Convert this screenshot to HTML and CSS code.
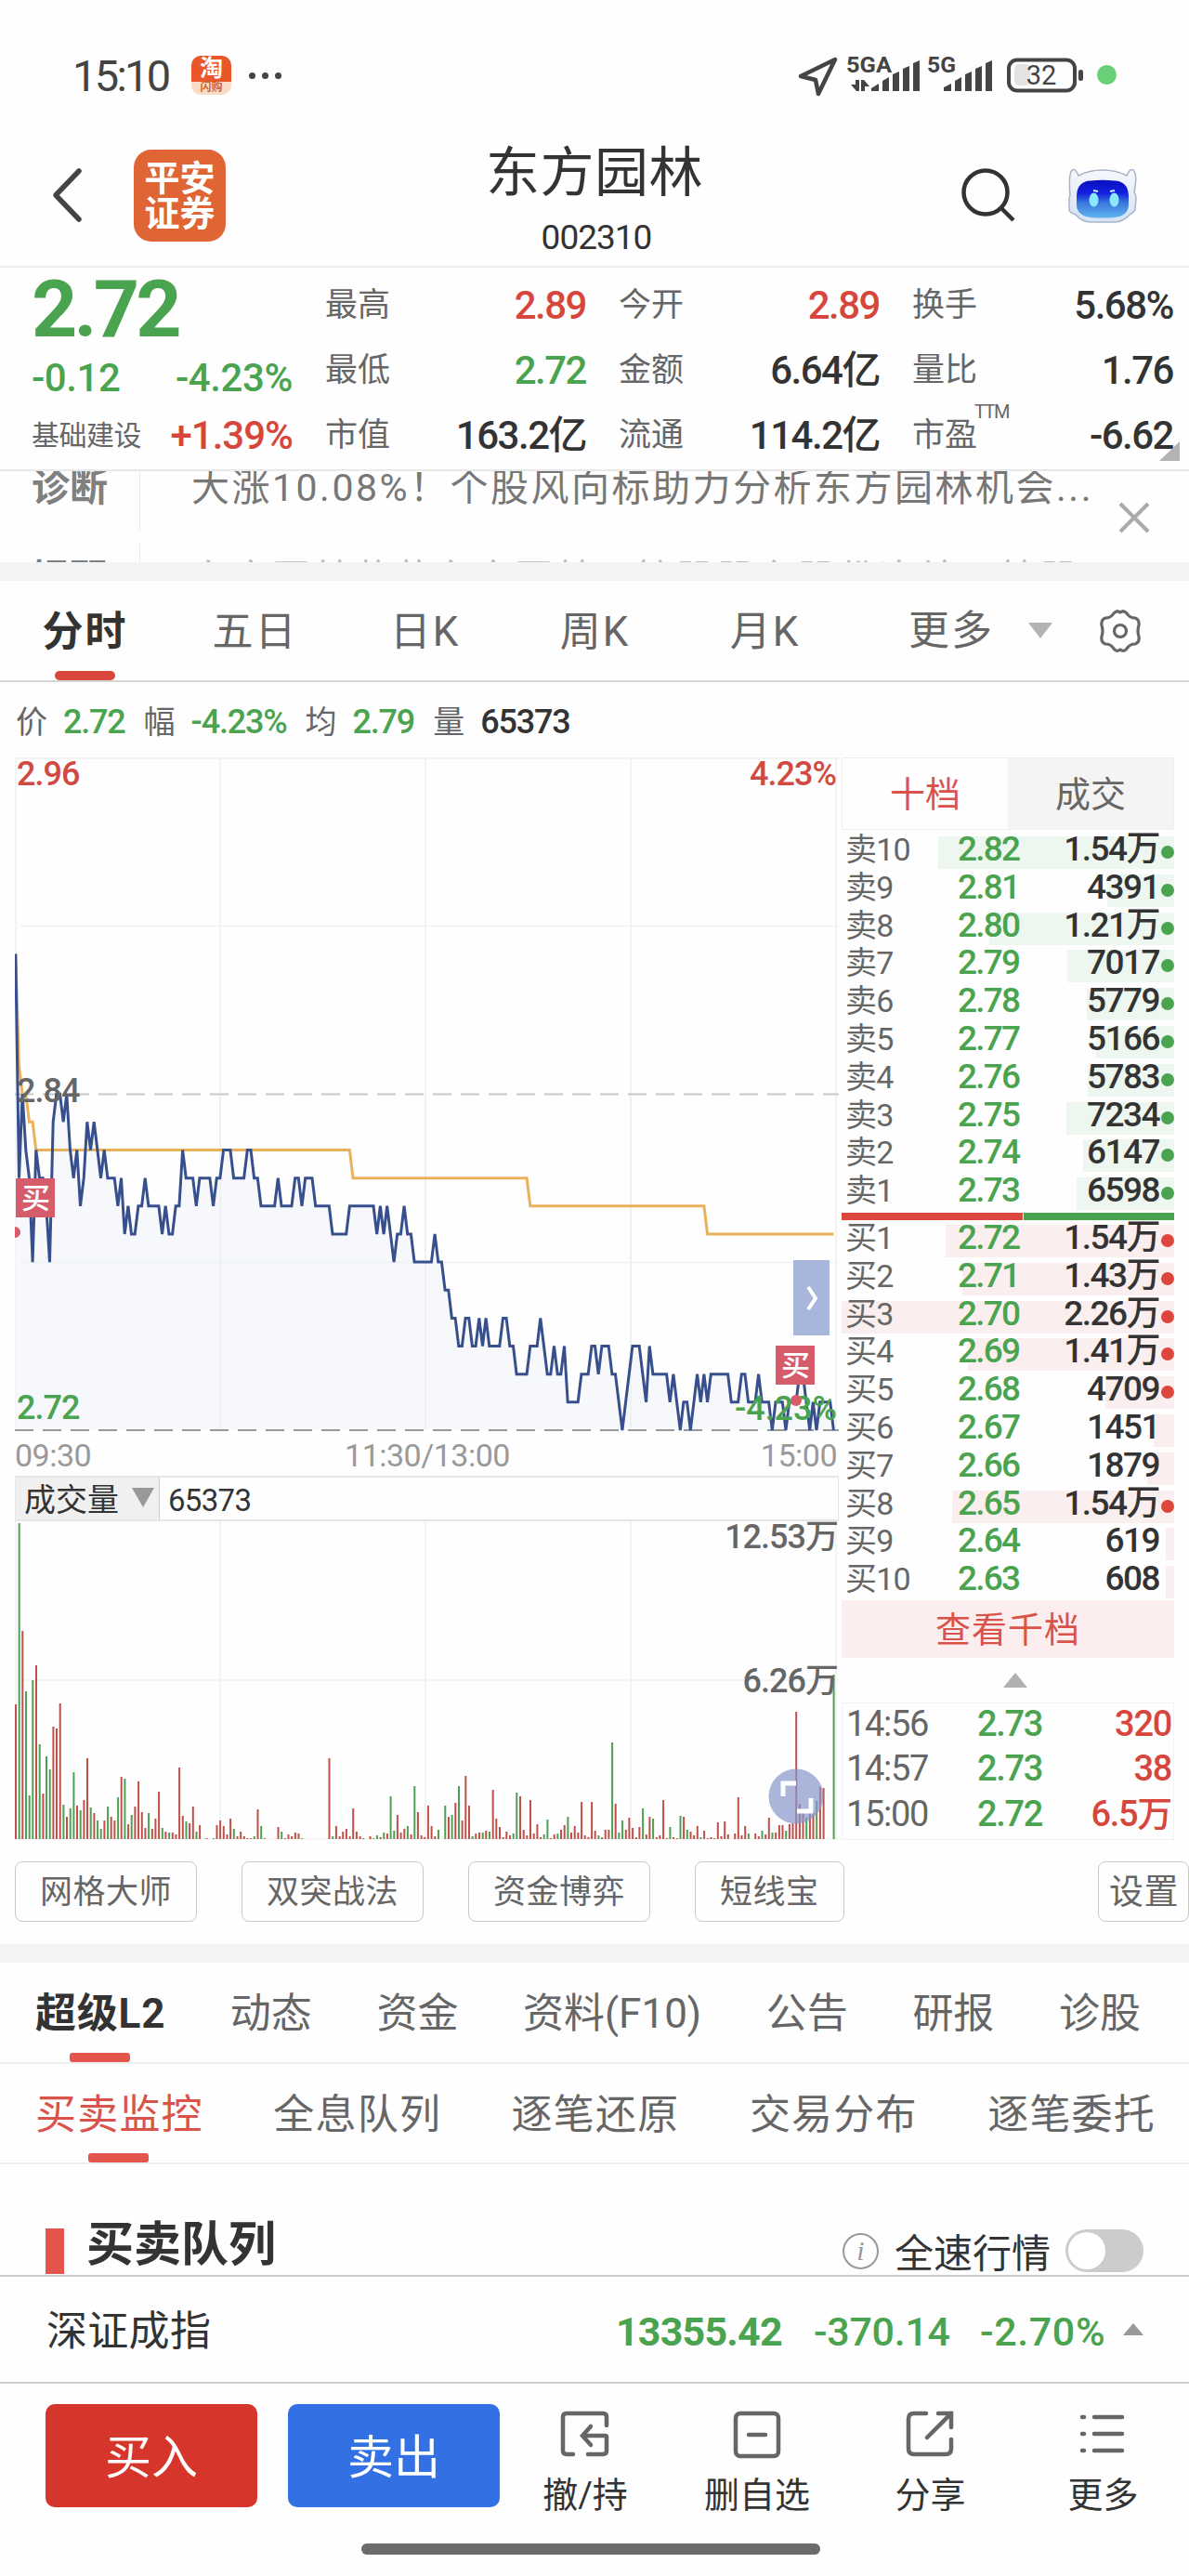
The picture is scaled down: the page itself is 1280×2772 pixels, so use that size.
FILE: index.html
```html
<!DOCTYPE html>
<html lang="zh-CN">
<head>
    <meta charset="UTF-8">
    <meta name="viewport" content="width=device-width, initial-scale=1.0">
    <title>东方园林 002310</title>
    <link rel="stylesheet" href="styles.css">
</head>
<body>
    <!-- Status bar -->
    <div class="status-bar">
        <span class="clock">15:10</span>
        <span class="app-badge"><b>淘</b><i>闪购</i></span>
        <span class="dots"><i></i><i></i><i></i></span>
        <svg class="status-icons" width="350" height="50" viewBox="856 56 350 50">
            <path d="M862 82 L899 64 L881 101 L878 86 Z" fill="none" stroke="#444" stroke-width="4.5" stroke-linejoin="round"/>
            <text x="911" y="78" class="net-label" textLength="49" lengthAdjust="spacingAndGlyphs">5GA</text>
            <path d="M925 86 V98 H922 L916 91 H921 V86 Z M927 98 V86 H930 L936 93 H931 V98 Z" fill="#444"/>
            <g fill="#444">
                <path d="M938 98 v-3 l8 -5 v8z M950 98 v-11 l7 -4 v15z M961 98 v-18 l7 -3 v21z M972 98 v-24 l7 -3 v27z M983 98 v-30 l7 -3 v33z"/>
                <path d="M1016 98 v-4 l8 -4 v8z M1028 98 v-11 l7 -4 v15z M1039 98 v-18 l7 -3 v21z M1050 98 v-24 l7 -3 v27z M1061 98 v-30 l7 -3 v33z"/>
                <rect x="1161" y="75" width="5" height="12" rx="2.5"/>
            </g>
            <text x="998" y="78" class="net-label" textLength="31" lengthAdjust="spacingAndGlyphs">5G</text>
            <rect x="1092" y="69" width="17" height="23" rx="5" fill="#e3e3e3"/>
            <rect x="1086" y="64.500" width="71" height="33" rx="9" fill="none" stroke="#444" stroke-width="4"/>
            <text x="1121" y="91" text-anchor="middle" class="battery-label">32</text>
            <circle cx="1191.500" cy="80.500" r="10.500" fill="#6ad078"/>
        </svg>
    </div>

    <!-- Header -->
    <div class="header">
        <svg class="back" width="36" height="60" viewBox="0 0 36 60"><path d="M31 4 L6 30 L31 56" fill="none" stroke="#444" stroke-width="5.500" stroke-linecap="round" stroke-linejoin="round"/></svg>
        <div class="logo"><span>平安</span><span>证券</span></div>
        <div class="title">
            <h1>东方园林</h1>
            <p>002310</p>
        </div>
        <svg class="search" width="60" height="60" viewBox="0 0 60 60"><circle cx="27" cy="27" r="23.500" fill="none" stroke="#333" stroke-width="4.500"/><path d="M43 43 L57 57" stroke="#333" stroke-width="4.500"/></svg>
        <svg class="robot" width="74" height="60" viewBox="0 0 74 60">
            <defs>
                <linearGradient id="face" x1="0" y1="0" x2="0" y2="1"><stop offset="0" stop-color="#0a0fc0"/><stop offset=".35" stop-color="#1420e0"/><stop offset=".6" stop-color="#3a78dc"/><stop offset="1" stop-color="#5fb4ee"/></linearGradient>
                <linearGradient id="shell" x1="0" y1="0" x2="0" y2="1"><stop offset="0" stop-color="#f6f7fb"/><stop offset="1" stop-color="#d6e2f4"/></linearGradient>
            </defs>
            <path d="M2 30 Q0 8 4 3 Q8 1 11 9 Q22 3 37 3 Q52 3 63 9 Q66 1 70 3 Q75 8 71 27 Q73 29 73 33 L72 46 Q70 49 66 51 Q59 59 50 59 L24 59 Q15 59 8 51 Q2 49 1 46 L1 33 Z" fill="url(#shell)" stroke="#a9b2c9" stroke-width="1.500"/>
            <path d="M9 30 Q10 15 24 14.500 Q37 13 50 14.500 Q64 15 65 30 L65 40 Q65 52 50 54 Q37 55 24 54 Q9 52 9 40 Z" fill="url(#face)"/>
            <ellipse cx="27.500" cy="35" rx="5" ry="7.500" fill="#8be8f8"/>
            <ellipse cx="49.500" cy="35" rx="5" ry="7.500" fill="#8be8f8"/>
            <path d="M27 25 l5 1 M45 26 l5 -1" stroke="#c9f0ff" stroke-width="2"/>
        </svg>
    </div>

    <!-- Quote -->
    <div class="quote">
        <div class="quote-main">
            <div class="last green">2.72</div>
            <div class="pair green"><span>-0.12</span><span>-4.23%</span></div>
            <div class="pair red"><small>基础建设</small><span>+1.39%</span></div>
        </div>
        <div class="quote-col">
            <div><label>最高</label><b class="red">2.89</b></div>
            <div><label>最低</label><b class="green">2.72</b></div>
            <div><label>市值</label><b>163.2亿</b></div>
        </div>
        <div class="quote-col">
            <div><label>今开</label><b class="red">2.89</b></div>
            <div><label>金额</label><b>6.64亿</b></div>
            <div><label>流通</label><b>114.2亿</b></div>
        </div>
        <div class="quote-col">
            <div><label>换手</label><b>5.68%</b></div>
            <div><label>量比</label><b>1.76</b></div>
            <div><label>市盈<sup>TTM</sup></label><b>-6.62</b></div>
        </div>
        <i class="corner"></i>
    </div>

    <!-- News ticker -->
    <div class="ticker">
        <div class="ticker-row"><b>诊断</b><span>大涨10.08%！个股风向标助力分析东方园林机会...</span></div>
        <div class="ticker-row next"><b>提醒</b><span>东方园林荣获东方园林，控股股东股份冻结，技股</span></div>
        <svg class="ticker-close" width="34" height="34" viewBox="0 0 34 34"><path d="M2 2 L32 32 M32 2 L2 32" stroke="#aaa" stroke-width="4"/></svg>
    </div>

    <!-- Period tabs -->
    <div class="period-tabs">
        <span class="tab active">分时</span>
        <span class="tab">五日</span>
        <span class="tab">日K</span>
        <span class="tab">周K</span>
        <span class="tab">月K</span>
        <span class="more">更多</span>
        <i class="caret"></i>
        <svg class="gear" width="48" height="48" viewBox="0 0 48 48"><path d="M17 5 Q20 1 24 4 Q28 1 31 5 Q34 10 40 10 Q45 12 44 18 Q42 24 44 30 Q45 36 40 38 Q34 38 31 43 Q28 47 24 44 Q20 47 17 43 Q14 38 8 38 Q3 36 4 30 Q6 24 4 18 Q3 12 8 10 Q14 10 17 5 Z" fill="none" stroke="#666" stroke-width="3.200" stroke-linejoin="round"/><circle cx="24" cy="24" r="6.500" fill="none" stroke="#666" stroke-width="3.200"/></svg>
    </div>

    <div class="info-row">
        <label>价</label><span class="green">2.72</span>
        <label>幅</label><span class="green">-4.23%</span>
        <label>均</label><span class="green">2.79</span>
        <label>量</label><span>65373</span>
    </div>

    <!-- Chart and order book -->
    <div class="market">
        <div class="charts">
            <svg id="price-chart" width="887" height="773" viewBox="16 815 887 773"></svg>
            <div class="volume-head">
                <span class="volume-select">成交量<i class="caret dark"></i></span>
                <span class="volume-value">65373</span>
            </div>
            <svg id="volume-chart" width="887" height="343" viewBox="16 1637 887 343"></svg>
        </div>

        <div class="book">
            <div class="book-tabs"><span class="active">十档</span><span>成交</span></div>
            <div class="orders" id="sell"></div>
            <div class="ratio"><i></i><i></i></div>
            <div class="orders" id="buy"></div>
            <div class="book-more">查看千档</div>
            <i class="up"></i>
            <div class="trades">
                <div><span>14:56</span><b>2.73</b><em>320</em></div>
                <div><span>14:57</span><b>2.73</b><em>38</em></div>
                <div><span>15:00</span><b>2.72</b><em>6.5万</em></div>
            </div>
        </div>
    </div>

    <!-- Tools -->
    <div class="chips">
        <span>网格大师</span>
        <span>双突战法</span>
        <span>资金博弈</span>
        <span>短线宝</span>
        <span class="setting">设置</span>
    </div>

    <!-- Detail tabs -->
    <div class="main-tabs">
        <span class="active">超级L2</span>
        <span>动态</span>
        <span>资金</span>
        <span>资料(F10)</span>
        <span>公告</span>
        <span>研报</span>
        <span>诊股</span>
    </div>
    <div class="sub-tabs">
        <span class="active">买卖监控</span>
        <span>全息队列</span>
        <span>逐笔还原</span>
        <span>交易分布</span>
        <span>逐笔委托</span>
    </div>

    <div class="queue-head">
        <i class="mark"></i>
        <h2>买卖队列</h2>
        <span class="info">i</span>
        <span class="speed">全速行情</span>
        <span class="switch"></span>
    </div>

    <!-- Index bar -->
    <div class="index-bar">
        <span class="index-name">深证成指</span>
        <b>13355.42</b>
        <span class="change">-370.14</span>
        <span class="percent">-2.70%</span>
        <i class="up small"></i>
    </div>

    <!-- Bottom actions -->
    <div class="actions">
        <button class="buy-btn">买入</button>
        <button class="sell-btn">卖出</button>
        <div class="action a1">
            <svg width="56" height="56" viewBox="0 0 56 56"><path d="M51 17 V8 Q51 4 47 4 H8 Q4 4 4 8 V44 Q4 48 8 48 H15 M31 48 H47 Q51 48 51 44 V29 Q51 28 49 28 H26 M34 18 L25 28 L34 38"/></svg>
            <span>撤/持</span>
        </div>
        <div class="action a2">
            <svg width="56" height="56" viewBox="0 0 56 56"><rect x="5" y="4" width="46" height="46" rx="5"/><path d="M19 27 H37"/></svg>
            <span>删自选</span>
        </div>
        <div class="action a3">
            <svg width="56" height="56" viewBox="0 0 56 56"><path d="M23 4 H10 Q4 4 4 10 V42 Q4 48 10 48 H44 Q50 48 50 42 V32 M36 4 H50 V19 M50 4 L24 30"/></svg>
            <span>分享</span>
        </div>
        <div class="action a4">
            <svg width="56" height="56" viewBox="0 0 56 56"><path d="M5 8 H7 M5 26 H7 M5 44 H7 M18 8 H48 M18 26 H48 M18 44 H48"/></svg>
            <span>更多</span>
        </div>
    </div>
    <div class="home-bar"></div>

    <script src="script.js"></script>
</body>
</html>
```
FILE: styles.css
```css
* {
    box-sizing: border-box;
}

body {
    margin: 0;
    width: 1280px;
    height: 2772px;
    overflow: hidden;
    background: #fefefe;
    color: #333;
    font-family: Roboto, "Noto Sans CJK SC", sans-serif;
    display: flex;
    flex-direction: column;
}

i, em {
    font-style: normal;
}

.green {
    color: #4aa34f;
}

.red {
    color: #d7463c;
}

/* Status bar */
.status-bar {
    height: 124px;
    padding: 38px 0 0 78px;
    display: flex;
    align-items: center;
    color: #444;
}

.clock {
    width: 128px;
    font-size: 47px;
    font-weight: 400;
    letter-spacing: -2.7px;
}

.app-badge {
    width: 43px;
    height: 42px;
    border-radius: 10px;
    background: linear-gradient(#e8562a 66%, #f8dcc8 66%);
    display: flex;
    flex-direction: column;
    align-items: center;
    color: #fff;
    overflow: hidden;
}

.app-badge b {
    font-size: 25px;
    line-height: 28px;
}

.app-badge i {
    font-size: 12px;
    line-height: 13px;
    color: #d0642f;
    font-weight: 700;
}

.dots {
    display: flex;
    gap: 7px;
    margin-left: 19px;
}

.dots i {
    width: 7px;
    height: 7px;
    border-radius: 50%;
    background: #444;
}

.status-icons {
    margin-left: 553px;
}

.net-label {
    font: 700 24px Roboto, sans-serif;
    fill: #444;
}

.battery-label {
    font: 400 29px Roboto, sans-serif;
    fill: #444;
}

/* Header */
.header {
    height: 164px;
    padding-left: 54px;
    border-bottom: 2px solid #ececec;
    display: flex;
    align-items: flex-start;
}

.back {
    margin-top: 56px;
}

.logo {
    width: 99px;
    height: 99px;
    margin: 37px 0 0 54px;
    padding-top: 12px;
    border-radius: 19px;
    background: #e06535;
    color: #fff;
    font-size: 38px;
    line-height: 38px;
    font-weight: 700;
    text-align: center;
    display: flex;
    flex-direction: column;
}

.title {
    width: 320px;
    margin-left: 239px;
    text-align: center;
}

.title h1 {
    margin: 20px -10px 0;
    font-size: 58px;
    line-height: 84px;
    font-weight: 400;
    letter-spacing: .5px;
    transform: translateX(-2px);
}

.title p {
    margin: 5px 0 0;
    font-size: 37px;
    line-height: 46px;
    letter-spacing: -1px;
}

.search {
    margin: 56px 0 0 232px;
}

.robot {
    margin: 56px 0 0 56px;
}

/* Quote */
.quote {
    height: 219px;
    padding: 0 17px 0 34px;
    border-bottom: 2px solid #e8e8e8;
    display: flex;
    gap: 35px;
    position: relative;
    font-size: 42px;
    letter-spacing: -1.5px;
}

.quote-main {
    width: 281px;
}

.last {
    height: 88px;
    padding-top: 2px;
    font-size: 86px;
    line-height: 86px;
    font-weight: 700;
    letter-spacing: -3.8px;
}

.pair {
    height: 62px;
    display: flex;
    justify-content: space-between;
    align-items: center;
    line-height: 62px;
    font-weight: 500;
    letter-spacing: -.4px;
}

.pair small {
    font-size: 30px;
    font-weight: 400;
    letter-spacing: -.5px;
    color: #666;
}

.pair.red span {
    letter-spacing: -1px;
}

.quote-col {
    width: 281px;
    padding-top: 6px;
}

.quote-col div {
    height: 70px;
    display: flex;
    justify-content: space-between;
    line-height: 70px;
}

.quote-col label {
    font-size: 35px;
    letter-spacing: 0;
    color: #666;
    position: relative;
}

.quote-col sup {
    position: absolute;
    left: 67px;
    top: -26px;
    font-size: 20px;
    line-height: 70px;
    letter-spacing: -1.5px;
}

.quote-col b {
    font-weight: 500;
}

.corner {
    position: absolute;
    left: 1248px;
    top: 187px;
    border-left: 22px solid transparent;
    border-bottom: 21px solid #b3b3b3;
}

/* News ticker */
.ticker {
    height: 98px;
    overflow: hidden;
    position: relative;
    color: #777;
}

.ticker-row {
    height: 84px;
    margin-top: -20px;
    display: flex;
    line-height: 76px;
    font-size: 41px;
    letter-spacing: 2.5px;
    white-space: nowrap;
}

.ticker-row b {
    width: 117px;
    padding-left: 34px;
    letter-spacing: 0;
    color: #808080;
}

.ticker-row span {
    margin: 0 0 0 33px;
    padding-left: 55px;
    border-left: 1px solid #e8e8e8;
}

.ticker-row.next {
    margin-top: 14px;
    color: #bbb;
}

.ticker-close {
    position: absolute;
    left: 1204px;
    top: 33px;
}

/* Period tabs */
.period-tabs {
    height: 129px;
    border-top: 20px solid #f2f3f5;
    border-bottom: 2px solid #d5d5d5;
    display: flex;
    align-items: center;
    font-size: 44px;
    letter-spacing: 2px;
    color: #666;
}

.tab {
    width: 183px;
    height: 107px;
    line-height: 110px;
    text-align: center;
}

.tab.active {
    color: #333;
    font-weight: 700;
    position: relative;
}

.tab.active::after,
.main-tabs .active::after,
.sub-tabs .active::after {
    content: "";
    position: absolute;
    left: 50%;
    bottom: 0;
    width: 65px;
    height: 10px;
    margin-left: -33px;
    border-radius: 5px;
    background: #d9463c;
}

.more {
    width: 129px;
    height: 107px;
    margin-left: 63px;
    line-height: 109px;
}

.caret {
    width: 0;
    border: 13.5px solid transparent;
    border-top: 17px solid #b3b3b3;
    border-bottom: 0;
}

.gear {
    margin-left: 49px;
}

/* Info row */
.info-row {
    height: 81px;
    padding-left: 17px;
    display: flex;
    align-items: center;
    font-size: 36px;
    letter-spacing: -1.2px;
    line-height: 80px;
    padding-top: 4px;
}

.info-row label {
    width: 51px;
    font-size: 34px;
    color: #666;
}

.info-row span {
    margin-right: 20px;
    font-weight: 500;
}

/* Market */
.market {
    height: 1165px;
    padding-left: 16px;
    display: flex;
    gap: 3px;
}

.charts {
    width: 887px;
}

.charts svg {
    display: block;
}

.charts text {
    font: 500 36px Roboto, "Noto Sans CJK SC", sans-serif;
    letter-spacing: -1px;
    fill: #666;
}

.charts .t-red {
    fill: #d04a42;
}

.charts .t-green {
    fill: #4aa34f;
}

.charts .t-axis {
    font-size: 34px;
    font-weight: 400;
    letter-spacing: -.5px;
    fill: #999;
}

.charts .t-mark {
    font-size: 31px;
    fill: #fff;
}

.volume-head {
    height: 49px;
    border: 1px solid #e6e6e6;
    border-width: 2px 1px;
    display: flex;
    line-height: 48px;
}

.volume-select {
    width: 155px;
    padding-left: 9px;
    background: #f0f0f0;
    border-right: 1px solid #ccc;
    font-size: 34px;
    display: flex;
    gap: 14px;
}

.caret.dark {
    height: 0;
    margin-top: 11px;
    border-width: 21px 12.5px 0;
    border-top-color: #999;
}

.volume-value {
    padding-left: 9px;
    font-size: 33px;
    letter-spacing: -.7px;
    line-height: 50px;
}

/* Order book */
.book {
    width: 358px;
}

.book-tabs {
    height: 78px;
    border: 1px solid #eee;
    display: flex;
    font-size: 38px;
    line-height: 78px;
    text-align: center;
    color: #666;
}

.book-tabs span {
    width: 50%;
    background: #f4f4f4;
}

.book-tabs .active {
    background: none;
    color: #d9534a;
}

.orders {
    padding-top: 4px;
}

#buy {
    padding-top: 2px;
}

.order {
    height: 40.8px;
    display: flex;
    position: relative;
    line-height: 40px;
    font-size: 37px;
    font-weight: 500;
    letter-spacing: -1.5px;
}

.order .bar {
    position: absolute;
    right: 0;
    top: 3px;
    height: 35px;
    background: #edf7ef;
}

#buy .bar {
    background: #fbeeee;
}

.order span {
    position: relative;
    margin-top: -3px;
}

.order .level {
    width: 125px;
    padding-left: 4px;
    font-size: 34px;
    font-weight: 400;
    letter-spacing: -.8px;
    color: #666;
}

.order .price {
    width: 90px;
    color: #4aa34f;
    letter-spacing: -1.8px;
}

.order .amount {
    flex: 1;
    padding-right: 16px;
    text-align: right;
}

.order .dot {
    position: absolute;
    right: 0;
    top: 13px;
    width: 14px;
    height: 14px;
    border-radius: 50%;
    background: #4aa34f;
}

#buy .dot {
    background: #dc463c;
}

.ratio {
    height: 8px;
    display: flex;
    gap: 1px;
}

.ratio i {
    width: 195px;
    background: #dc463c;
}

.ratio i + i {
    flex: 1;
    background: #4aa34f;
}

.book-more {
    height: 62px;
    margin-top: -1px;
    background: #fceeee;
    color: #d9534a;
    font-size: 38px;
    line-height: 65px;
    letter-spacing: 1px;
    text-align: center;
}

.up {
    display: block;
    width: 0;
    margin: 16px 0 0 174px;
    border: 13px solid transparent;
    border-top: 0;
    border-bottom: 16px solid #b0b0b0;
}

.trades {
    margin-top: 16px;
    padding: 0 2px 0 4px;
    border: 1px solid #f3f3f3;
    height: 148px;
    font-size: 38px;
    font-weight: 500;
    letter-spacing: -1.3px;
}

.trades div {
    height: 48.5px;
    display: flex;
    line-height: 44px;
}

.trades span {
    width: 141px;
    font-weight: 400;
    color: #666;
}

.trades b {
    font-weight: 500;
    color: #4aa34f;
}

.trades em {
    flex: 1;
    text-align: right;
    color: #d7463c;
}

/* Chips */
.chips {
    height: 112px;
    padding: 23px 0 0 16px;
    display: flex;
    gap: 48px;
    font-size: 35px;
    color: #666;
}

.chips span {
    height: 65px;
    padding: 0 26px;
    border: 1.5px solid #c8c8c8;
    border-radius: 8px;
    line-height: 66px;
    white-space: nowrap;
    letter-spacing: .5px;
}

.chips .setting {
    width: 98px;
    margin: 0 0 0 auto;
    padding: 0 0 0 11px;
    font-size: 37px;
}

/* Detail tabs */
.main-tabs,
.sub-tabs {
    display: flex;
    justify-content: space-between;
    font-size: 44px;
    color: #666;
    border-bottom: 2px solid #eee;
}

.main-tabs {
    height: 129px;
    padding: 0 52px 0 38px;
    border-top: 20px solid #f2f3f5;
    line-height: 110px;
}

.sub-tabs {
    height: 108px;
    padding: 0 36px 0 38px;
    line-height: 110px;
    letter-spacing: 1.2px;
}

.main-tabs .active,
.sub-tabs .active {
    position: relative;
}

.main-tabs .active {
    color: #333;
    font-weight: 700;
    letter-spacing: .8px;
}

.sub-tabs .active {
    color: #d9534a;
}

.main-tabs .active::after,
.sub-tabs .active::after {
    border-radius: 3px;
    background: #e4554e;
}

/* Queue head */
.queue-head {
    height: 121px;
    padding: 0 49px;
    border-bottom: 2px solid #ccc;
    display: flex;
}

.mark {
    width: 20px;
    height: 49px;
    margin-top: 69px;
    background: #e4554e;
}

.queue-head h2 {
    width: 813px;
    margin: 50px 0 0 24px;
    font-size: 51px;
    line-height: 74px;
    font-weight: 700;
}

.info {
    width: 39px;
    height: 39px;
    margin-top: 74px;
    margin-left: 1px;
    flex: none;
    border: 2px solid #999;
    border-radius: 50%;
    color: #999;
    font: italic 30px/34px "Liberation Serif", serif;
    text-align: center;
}

.speed {
    flex: none;
    margin: 67px 16px 0 17px;
    font-size: 42px;
    line-height: 60px;
}

.switch {
    width: 84px;
    height: 46px;
    margin-top: 70px;
    flex: none;
    border-radius: 23px;
    background: #ccc;
    padding: 3px;
}

.switch::before {
    content: "";
    display: block;
    width: 40px;
    height: 40px;
    border-radius: 50%;
    background: #fff;
}

/* Index bar */
.index-bar {
    height: 115px;
    padding-left: 50px;
    border-bottom: 2px solid #ccc;
    display: flex;
    line-height: 118px;
    font-size: 43px;
    font-weight: 500;
    letter-spacing: -.8px;
    color: #4aa34f;
}

.index-name {
    width: 613px;
    font-size: 44px;
    font-weight: 400;
    letter-spacing: .3px;
    color: #333;
}

.index-bar b {
    width: 213px;
    font-weight: 700;
}

.index-bar .change {
    width: 179px;
    letter-spacing: -.3px;
}

.index-bar .percent {
    width: 137px;
    letter-spacing: .6px;
}

.up.small {
    margin: 50px 0 0 17px;
    border-width: 0 11px 13px;
    border-bottom-color: #999;
    height: 0;
}

/* Bottom actions */
.actions {
    height: 171px;
    padding: 22px 0 0 49px;
    display: flex;
}

.actions button {
    flex: none;
    width: 228px;
    height: 111px;
    margin-right: 33px;
    padding: 0 0 5px;
    border: 0;
    border-radius: 10px;
    color: #fff;
    font-family: inherit;
    font-size: 50px;
}

.buy-btn {
    background: #d6352b;
}

.sell-btn {
    background: #3370e3;
}

.action {
    flex: none;
    display: flex;
    flex-direction: column;
    align-items: center;
    padding-top: 6px;
    font-size: 38px;
    line-height: 56px;
}

.action svg {
    fill: none;
    stroke: #666;
    stroke-width: 4.5;
    stroke-linecap: round;
}

.action span {
    margin-top: 8px;
}

.a1 {
    width: 118px;
}

.a2 {
    width: 252px;
}

.a3 {
    width: 121px;
}

.a4 {
    width: 251px;
}

.home-bar {
    width: 494px;
    height: 12px;
    margin: 1px 0 0 389px;
    border-radius: 6px;
    background: #6b6b6b;
}
```
FILE: script.js
```js
const STEP = 3.669;

// [minute, price in cents], points between are on a straight line
const price = [
    [0, 289], [1, 281], [2, 284], [3, 282], [4, 281], [5, 278], [6, 282], [7, 281], [8, 281], [9, 280],
    [10, 278], [11, 283], [12, 284], [13, 284], [14, 283], [15, 284], [16, 282], [17, 281], [18, 282],
    [19, 280], [20, 281], [21, 283], [22, 282], [23, 283], [24, 282], [25, 281], [26, 282], [27, 281],
    [29, 281], [30, 280], [31, 281], [32, 279], [33, 280], [34, 279], [35, 279], [36, 280], [37, 280],
    [38, 281], [39, 280], [42, 280], [43, 279], [44, 280], [45, 279], [46, 279], [47, 280], [48, 280],
    [49, 282], [50, 281], [52, 281], [53, 280], [54, 281], [57, 281], [58, 280], [59, 281], [60, 281],
    [61, 282], [63, 282], [64, 281], [67, 281], [68, 282], [69, 282], [70, 281], [71, 281], [72, 280],
    [76, 280], [77, 281], [78, 280], [81, 280], [82, 281], [83, 281], [84, 280], [85, 281], [87, 281],
    [88, 280], [92, 280], [93, 279], [97, 279], [98, 280], [105, 280], [106, 279], [107, 280], [108, 279],
    [109, 280], [110, 279], [111, 278], [112, 279], [113, 279], [114, 280], [115, 279], [116, 279],
    [117, 278], [122, 278], [123, 279], [124, 278], [125, 278], [126, 277], [127, 277], [128, 276],
    [129, 276], [130, 275], [131, 275], [132, 276], [133, 276], [134, 275], [135, 275], [136, 276],
    [137, 275], [138, 276], [139, 275], [142, 275], [143, 276], [144, 276], [145, 275], [146, 275],
    [147, 274], [150, 274], [151, 275], [153, 275], [154, 276], [155, 275], [156, 274], [157, 274],
    [158, 275], [159, 274], [160, 274], [161, 275], [162, 273], [165, 273], [166, 274], [168, 274],
    [169, 275], [170, 275], [171, 274], [172, 275], [174, 275], [175, 274], [176, 274], [178, 272],
    [181, 275], [183, 275], [184, 274], [185, 273], [186, 275], [187, 274], [191, 274], [192, 273],
    [193, 274], [195, 272], [196, 273], [197, 273], [198, 272], [200, 274], [201, 273], [202, 274],
    [203, 273], [204, 274], [209, 274], [210, 273], [212, 273], [213, 274], [214, 274], [215, 273],
    [217, 273], [218, 274], [219, 273], [221, 273], [222, 272], [223, 273], [225, 273], [226, 272],
    [227, 273], [229, 273], [230, 274], [231, 274], [233, 272], [234, 273], [235, 272], [236, 273],
    [239, 273], [240, 272]
];

const average = [
    [0, 289], [1, 285], [2, 284], [3, 284], [4, 283], [5, 283], [6, 282], [98, 282], [99, 281],
    [150, 281], [151, 280], [202, 280], [203, 279], [240, 279]
];

// minute:height, g = green bar
const volume = '0:145 1:340g 2:224 3:159g 4:47g 5:171g 6:187 7:102g 8:49 9:89g 10:75g 11:121 12:119 13:146 ' +
    '14:37g 15:24 16:33g 17:72g 18:36 19:31g 20:42 21:87 22:34g 23:28 24:20g 25:11g 26:20 27:35g 28:24 29:20 ' +
    '30:45g 31:67 32:65g 33:16 34:26g 35:35 36:62 37:29 38:12 39:28g 40:11 41:22 42:51 43:12g 44:8 45:7g 46:7 ' +
    '47:5 48:77 49:25 50:19g 51:17 52:35 53:8g 54:15 56:1 58:1g 59:15 60:20 61:14 62:5 63:22 64:11g 65:3 66:8 ' +
    '67:3 68:1 69:1 70:3g 71:32 72:14g 73:1 77:13 78:8g 79:1 80:5 81:3 82:7 83:6 84:1g 92:87 93:3g 94:14 95:3 ' +
    '96:8 97:11 98:3 99:33 100:8 101:3 102:1 104:3 105:1g 106:4g 107:2 108:7g 109:6 110:46g 111:9g 112:26 ' +
    '113:7 114:11 115:14g 116:5 117:57g 118:29 119:4 120:2 121:36 122:14 123:3 124:10g 126:36g 127:24 128:26g ' +
    '129:39 130:57g 131:20 132:68 133:36 134:3g 135:6 136:7 137:7g 138:9 139:8g 140:53 141:22 142:13 143:2 ' +
    '144:8 145:4 146:6g 147:50g 148:46 149:10 150:4 151:42 152:6 153:16 154:2 155:5g 156:21g 157:1 158:5 ' +
    '159:6g 160:10 161:15 162:24g 163:7 164:14 165:7 166:40 167:4 168:2 169:40 170:9 171:4g 172:2 173:10 ' +
    '174:10 175:104g 176:38 177:7g 178:20g 179:10 180:23 181:12 182:2 183:13 184:33g 185:5 186:24 187:22g ' +
    '188:2 189:4 190:42 191:1 192:13g 193:2 194:1 195:25g 196:24 197:10g 198:8 199:4 200:14 201:2g 202:9 ' +
    '203:1 204:2 205:1 206:18 207:3 208:19 209:5 211:6 212:45 213:4 214:14 215:6g 217:6 218:3 219:9g 220:5 ' +
    '221:23 222:7g 223:7 224:15 225:15 226:9g 227:16 228:17 229:137 230:38 231:29 232:23g 233:29 234:30 ' +
    '235:41g 236:56 237:55 240:177g';

const x = m => (16.8 + m * STEP).toFixed(1);
const y = p => (1539 - (p - 272) * 30.15).toFixed(1);
const line = list => list.map(([m, p]) => x(m) + ',' + y(p)).join(' ');

function vertical(top, bottom) {
    return [17, 237, 458, 679, 900].map(v => `<path d="M${v} ${top} V${bottom}" stroke="#f3f3f4" stroke-width="2"/>`).join('');
}

// Price chart
document.getElementById('price-chart').innerHTML = `
    <path d="M16 816 H903" stroke="#f3f3f4" stroke-width="2"/>
    ${vertical(816, 1539)}
    <polygon points="17,1539 ${line(price)} 897,1539" fill="#f6f8fc"/>
    <path d="M22 996.500 H903 M22 1358.500 H903" stroke="#f0f1f3" stroke-width="1.500"/>
    <path d="M237 1180 V1539 M458 1180 V1539 M679 1180 V1539" stroke="#eef0f3" stroke-width="2"/>
    <path d="M16 1177.500 H903" stroke="#c8c8c8" stroke-width="2" stroke-dasharray="20 10"/>
    <path d="M16 1539 H903" stroke="#999" stroke-width="2" stroke-dasharray="20 10"/>
    <polyline points="${line(average)}" fill="none" stroke="#eab15c" stroke-width="3"/>
    <polyline points="${line(price)}" fill="none" stroke="#374f8c" stroke-width="3"/>
    <text x="18" y="845" class="t-red">2.96</text>
    <text x="900" y="845" class="t-red" text-anchor="end">4.23%</text>
    <text x="18" y="1186">2.84</text>
    <text x="18" y="1527" class="t-green">2.72</text>
    <text x="900" y="1528" class="t-green" text-anchor="end" textLength="109">-4.23%</text>
    <rect x="17" y="1268" width="42" height="42" fill="#d65c6b"/>
    <text x="38" y="1300" class="t-mark" text-anchor="middle">买</text>
    <circle cx="16" cy="1326" r="6" fill="#d65c6b"/>
    <rect x="835" y="1448" width="42" height="42" fill="#d65c6b"/>
    <text x="856" y="1480" class="t-mark" text-anchor="middle">买</text>
    <circle cx="857" cy="1507" r="6" fill="#d65c6b"/>
    <rect x="854" y="1356" width="39" height="81" fill="#a9b6db"/>
    <path d="M870 1385 L878 1397 L870 1409" fill="none" stroke="#fff" stroke-width="4"/>
    <text x="16" y="1578" class="t-axis">09:30</text>
    <text x="460" y="1578" class="t-axis" text-anchor="middle">11:30/13:00</text>
    <text x="901" y="1578" class="t-axis" text-anchor="end">15:00</text>`;

// Volume chart
const bars = volume.split(' ').map(item => {
    const [m, h] = item.split(':');
    const color = h.endsWith('g') ? '#4f9f55' : '#c0504a';
    return `<rect x="${x(m) - 0.8}" y="${1979 - parseInt(h)}" width="2" height="${parseInt(h)}" fill="${color}"/>`;
}).join('');

document.getElementById('volume-chart').innerHTML = `
    ${vertical(1637, 1979)}
    <path d="M16 1808 H903" stroke="#f5f5f6" stroke-width="2"/>
    <path d="M16 1979 H903" stroke="#eee"/>
    ${bars}
    <circle cx="857" cy="1933" r="29.500" fill="#8896cb" opacity=".7"/>
    <path d="M843 1933 V1919 H857 M873 1935 V1949 H858" fill="none" stroke="#fff" stroke-width="5"/>
    <text x="902" y="1666" text-anchor="end">12.53万</text>
    <text x="902" y="1821" text-anchor="end">6.26万</text>`;

// Order book: level, price, amount, bar width, dot
const sell = [
    ['卖10', '2.82', '1.54万', 254, 1], ['卖9', '2.81', '4391', 72, 1], ['卖8', '2.80', '1.21万', 199, 1],
    ['卖7', '2.79', '7017', 115, 1], ['卖6', '2.78', '5779', 94, 1], ['卖5', '2.77', '5166', 84, 1],
    ['卖4', '2.76', '5783', 93, 1], ['卖3', '2.75', '7234', 116, 1], ['卖2', '2.74', '6147', 98, 1],
    ['卖1', '2.73', '6598', 105, 1]
];
const buy = [
    ['买1', '2.72', '1.54万', 246, 1], ['买2', '2.71', '1.43万', 228, 1], ['买3', '2.70', '2.26万', 358, 1],
    ['买4', '2.69', '1.41万', 222, 1], ['买5', '2.68', '4709', 74, 1], ['买6', '2.67', '1451', 22, 0],
    ['买7', '2.66', '1879', 29, 0], ['买8', '2.65', '1.54万', 239, 1], ['买9', '2.64', '619', 9, 0],
    ['买10', '2.63', '608', 9, 0]
];

function renderOrders(id, rows) {
    document.getElementById(id).innerHTML = rows.map(([level, p, amount, width, dot]) => `
        <div class="order">
            <i class="bar" style="width: ${width}px"></i>
            <span class="level">${level}</span>
            <span class="price">${p}</span>
            <span class="amount">${amount}</span>
            ${dot ? '<i class="dot"></i>' : ''}
        </div>`).join('');
}

renderOrders('sell', sell);
renderOrders('buy', buy);
```
